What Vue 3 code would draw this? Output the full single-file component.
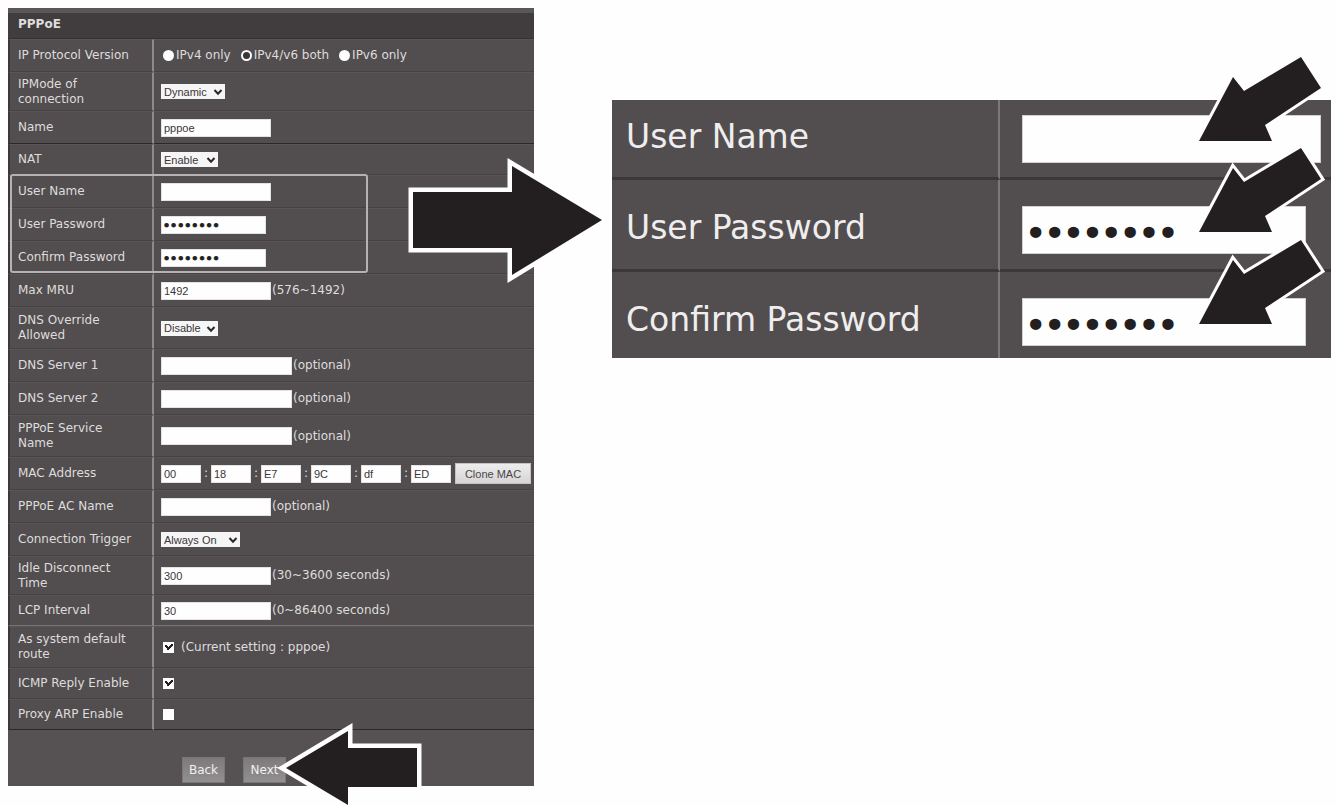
<script setup>
import { reactive } from 'vue'

const form = reactive({
  protocol: 'v46',
  mode: 'Dynamic',
  name: 'pppoe',
  nat: 'Enable',
  user: '',
  password: 'password',
  confirm: 'password',
  mru: '1492',
  dnsOverride: 'Disable',
  dns1: '',
  dns2: '',
  service: '',
  mac: ['00', '18', 'E7', '9C', 'df', 'ED'],
  acName: '',
  trigger: 'Always On',
  idle: '300',
  lcp: '30',
  defaultRoute: true,
  icmp: true,
  proxyArp: false
})

const protocols = [
  { value: 'v4', label: 'IPv4 only' },
  { value: 'v46', label: 'IPv4/v6 both' },
  { value: 'v6', label: 'IPv6 only' }
]

const rows = [
  { key: 'protocol', label: 'IP Protocol Version', kind: 'radio', size: 'mid' },
  { key: 'mode', label: 'IPMode of connection', kind: 'select', width: 'w64', size: 'double', options: ['Dynamic', 'Static'] },
  { key: 'name', label: 'Name', kind: 'text', width: 'w110', size: 'mid rule' },
  { key: 'nat', label: 'NAT', kind: 'select', width: 'w57', size: 'short', options: ['Enable', 'Disable'] },
  { key: 'user', label: 'User Name', kind: 'text', width: 'w110', size: 'mid' },
  { key: 'password', label: 'User Password', kind: 'password', width: 'w105', size: 'mid' },
  { key: 'confirm', label: 'Confirm Password', kind: 'password', width: 'w105', size: 'mid' },
  { key: 'mru', label: 'Max MRU', kind: 'text', width: 'w110', size: 'mid', note: '(576~1492)' },
  { key: 'dnsOverride', label: 'DNS Override Allowed', kind: 'select', width: 'w57', size: 'tall', options: ['Disable', 'Enable'] },
  { key: 'dns1', label: 'DNS Server 1', kind: 'text', width: 'w131', size: 'mid', note: '(optional)' },
  { key: 'dns2', label: 'DNS Server 2', kind: 'text', width: 'w131', size: 'mid', note: '(optional)' },
  { key: 'service', label: 'PPPoE Service Name', kind: 'text', width: 'w131', size: 'tall', note: '(optional)' },
  { key: 'mac', label: 'MAC Address', kind: 'mac', size: 'mid' },
  { key: 'acName', label: 'PPPoE AC Name', kind: 'text', width: 'w110', size: 'mid', note: '(optional)' },
  { key: 'trigger', label: 'Connection Trigger', kind: 'select', width: 'w79', size: 'mid', options: ['Always On', 'On Demand'] },
  { key: 'idle', label: 'Idle Disconnect Time', kind: 'text', width: 'w110', size: 'double', note: '(30~3600 seconds)' },
  { key: 'lcp', label: 'LCP Interval', kind: 'text', width: 'w110', size: 'short light', note: '(0~86400 seconds)' },
  { key: 'defaultRoute', label: 'As system default route', kind: 'check', size: 'tall', note: '(Current setting : pppoe)' },
  { key: 'icmp', label: 'ICMP Reply Enable', kind: 'check', size: 'short' },
  { key: 'proxyArp', label: 'Proxy ARP Enable', kind: 'check', size: 'short rule' }
]

const details = [
  { key: 'user', label: 'User Name', type: 'text' },
  { key: 'password', label: 'User Password', type: 'password' },
  { key: 'confirm', label: 'Confirm Password', type: 'password' }
]
</script>

<template>
  <main class="page">
    <form class="panel" @submit.prevent>
      <h1 class="title">PPPoE</h1>
      <table class="settings">
        <tbody>
          <tr v-for="row in rows" :key="row.key" :class="row.size">
            <th scope="row">
              <span v-if="row.kind === 'radio' || row.kind === 'mac'">{{ row.label }}</span>
              <label v-else :for="row.key">{{ row.label }}</label>
            </th>
            <td>
              <div class="field">
                <template v-if="row.kind === 'radio'">
                  <label v-for="p in protocols" :key="p.value" class="choice">
                    <input v-model="form.protocol" type="radio" name="protocol" :value="p.value">{{ p.label }}
                  </label>
                </template>

                <span v-else-if="row.kind === 'select'" class="drop" :class="row.width">
                  <select :id="row.key" v-model="form[row.key]">
                    <option v-for="o in row.options" :key="o">{{ o }}</option>
                  </select>
                  <svg class="chevron" viewBox="0 0 10 8" aria-hidden="true"><path d="M1.5 2 5 5.8 8.5 2" /></svg>
                </span>

                <template v-else-if="row.kind === 'mac'">
                  <template v-for="(part, i) in form.mac" :key="i">
                    <span v-if="i" class="colon">:</span>
                    <input v-model="form.mac[i]" class="box octet" type="text" :aria-label="`MAC Address part ${i + 1}`">
                  </template>
                  <button type="button" class="clone">Clone MAC</button>
                </template>

                <input v-else-if="row.kind === 'check'" :id="row.key" v-model="form[row.key]" type="checkbox">

                <input v-else :id="row.key" v-model="form[row.key]" class="box" :class="row.width" :type="row.kind">

                <span v-if="row.note" class="note">{{ row.note }}</span>
              </div>
            </td>
          </tr>
        </tbody>
      </table>
      <div class="highlight"></div>

      <footer class="actions">
        <button type="button">Back</button>
        <button type="submit">Next</button>
        <svg class="next-arrow" width="148" height="84" viewBox="276 722 148 84" aria-hidden="true">
          <path class="arrow wide" d="M286 768 348 731V748H417V787H348V805Z" />
        </svg>
      </footer>

      <svg class="zoom-arrow" width="208" height="132" viewBox="404 154 208 132" aria-hidden="true">
        <path class="arrow wide" d="M413 192H512V166L602 220 512 275V248H413Z" />
      </svg>
    </form>

    <section class="detail">
      <table>
        <tbody>
          <tr v-for="d in details" :key="d.key" :class="d.key">
            <th scope="row"><label :for="`detail-${d.key}`">{{ d.label }}</label></th>
            <td>
              <div class="entry">
                <input :id="`detail-${d.key}`" v-model="form[d.key]" :type="d.type">
                <svg class="pointer" width="134" height="96" viewBox="-6 -26 134 96" aria-hidden="true">
                  <path class="arrow" d="M0 64 34 0 45 14 102-20 122 11 66 48 73 64Z" />
                </svg>
              </div>
            </td>
          </tr>
        </tbody>
      </table>
    </section>
  </main>
</template>

<style>
body {
  background: #fefefe;
}
</style>

<style scoped>
* {
  box-sizing: border-box;
}

.page {
  display: grid;
  grid-template-columns: minmax(0, 526fr) minmax(0, 719fr);
  column-gap: 78px;
  align-items: start;
  min-height: 100vh;
  padding: 8px 6px 20px 8px;
  font-family: "DejaVu Sans", Verdana, sans-serif;
  font-size: 12px;
  line-height: 15px;
  color: #dedcdc;
}

.panel {
  position: relative;
  background: #565253;
}

.title {
  margin: 0;
  height: 31px;
  padding: 4px 10px 0;
  border-top: 5px solid #5b5758;
  border-bottom: 1px solid #353132;
  background: #413d3e;
  font-size: 12px;
  line-height: 15px;
}

table {
  width: 100%;
  table-layout: fixed;
  border-collapse: separate;
  border-spacing: 0;
}

th,
td {
  padding: 0;
  text-align: left;
  vertical-align: middle;
  font-weight: normal;
}

.settings {
  background: #524e4f;
}

.settings th,
.settings td {
  border-top: 1px solid #595556;
  border-bottom: 1px solid #464243;
}

.settings th {
  width: 146px;
  padding: 0 18px 0 8px;
  border-left: 2px solid #3c3839;
  border-right: 2px solid #8d8a8b;
}

.settings td {
  padding-left: 7px;
}

.settings .rule th,
.settings .rule td {
  border-bottom-color: #2c2829;
}

.settings .light th,
.settings .light td {
  border-bottom-color: #777374;
}

.short { height: 31px; }
.mid { height: 33px; }
.double { height: 39px; }
.tall { height: 42px; }

.field {
  display: flex;
  align-items: center;
  white-space: nowrap;
}

.w57 { width: 57px; }
.w64 { width: 64px; }
.w79 { width: 79px; }
.w105 { width: 105px; }
.w110 { width: 110px; }
.w131 { width: 131px; }

.box {
  height: 18px;
  padding: 0 2px;
  border: 1px solid #e4e2e2;
  border-radius: 0;
  background: #fefefe;
  color: #3a3637;
  font: 11px "Liberation Sans", Arial, sans-serif;
}

.box[type="password"] {
  padding: 2px 1px 0;
  color: #231f20;
  font: 12px "DejaVu Sans", sans-serif;
  -webkit-text-stroke: 1px #231f20;
}

.note {
  padding-left: 1px;
}

.drop {
  position: relative;
  display: block;
  height: 15px;
}

.drop select {
  appearance: none;
  display: block;
  width: 100%;
  height: 15px;
  padding: 0 0 0 3px;
  border: 0;
  border-radius: 0;
  background: #f6f5f5;
  color: #3a3637;
  font: 11px "Liberation Sans", Arial, sans-serif;
}

.chevron {
  position: absolute;
  top: 4px;
  right: 2px;
  width: 10px;
  height: 8px;
  fill: none;
  stroke: #2c2829;
  stroke-width: 2;
  pointer-events: none;
}

.choice {
  display: flex;
  align-items: center;
  gap: 2px;
  margin-right: 8px;
}

input[type="radio"],
input[type="checkbox"] {
  appearance: none;
  flex: none;
  width: 11px;
  height: 11px;
  margin: 0 0 0 2px;
  background: #fefefe;
}

input[type="radio"] {
  border-radius: 50%;
}

input[type="radio"]:checked {
  border: 2px solid #fefefe;
  background: #3a3637;
}

input[type="checkbox"]:checked {
  background:
    linear-gradient(45deg, transparent 3px, #231f20 3px, #231f20 5px, transparent 5px) 2px 3px / 4px 6px no-repeat,
    linear-gradient(-45deg, transparent 3px, #231f20 3px, #231f20 5px, transparent 5px) 4px 2px / 6px 6px no-repeat,
    #fefefe;
}

input[type="checkbox"] + .note {
  padding-left: 7px;
}

.octet {
  width: 40px;
}

.colon {
  width: 10px;
  text-align: center;
}

.clone {
  height: 21px;
  width: 76px;
  margin-left: 4px;
  padding: 0;
  border: 1px solid #c4c2c2;
  background: linear-gradient(#eeeded, #d6d4d4);
  color: #4a4647;
  font: 11px "Liberation Sans", Arial, sans-serif;
}

.highlight {
  position: absolute;
  top: 166px;
  left: 2px;
  width: 68%;
  height: 99px;
  border: 2px solid #b4b2b2;
  border-radius: 3px;
  pointer-events: none;
}

.actions {
  position: relative;
  display: flex;
  gap: 18px;
  height: 56px;
  padding: 27px 0 0 174px;
}

.actions button {
  width: 43px;
  height: 26px;
  padding: 0;
  border: 1px solid #7a7677;
  background: linear-gradient(#7e7a7b, #928f90);
  color: #f0efef;
  font: 12px "DejaVu Sans", sans-serif;
}

.next-arrow {
  position: absolute;
  top: -8px;
  left: 268px;
}

.zoom-arrow {
  position: absolute;
  top: 146px;
  right: -78px;
}

.arrow {
  fill: #231f20;
  stroke: #fefefe;
  stroke-width: 6;
  paint-order: stroke;
}

.wide {
  stroke-width: 9;
}

.detail {
  margin-top: 92px;
  background: #524e4f;
  font-size: 33px;
  line-height: 40px;
  color: #efeded;
}

.detail th,
.detail td {
  border-bottom: 3px solid #3c3839;
}

.detail tr:last-child th,
.detail tr:last-child td {
  border-bottom: 0;
}

.detail th {
  width: 54%;
  padding: 0 0 4px 14px;
  border-right: 2px solid #7c7879;
}

.detail td {
  padding: 0 10px 0 22px;
}

.detail .user { height: 80px; }
.detail .password { height: 92px; }
.detail .confirm { height: 86px; }

.detail .password th {
  padding-top: 10px;
}

.detail .confirm th {
  padding-top: 14px;
}

.detail .password td {
  padding-top: 10px;
}

.detail .confirm td {
  padding-top: 14px;
}

.entry {
  position: relative;
}

.entry input {
  display: block;
  width: 100%;
  height: 48px;
  padding: 0 6px;
  border: 1px solid #d2d0d0;
  border-radius: 0;
  background: #fefefe;
  color: #231f20;
  font: 32px "DejaVu Sans", sans-serif;
}

.entry input[type="password"] {
  width: 95%;
  padding: 6px 3px 0;
  -webkit-text-stroke: 2px #231f20;
}

.pointer {
  position: absolute;
  top: -64px;
  right: -6px;
}
</style>
